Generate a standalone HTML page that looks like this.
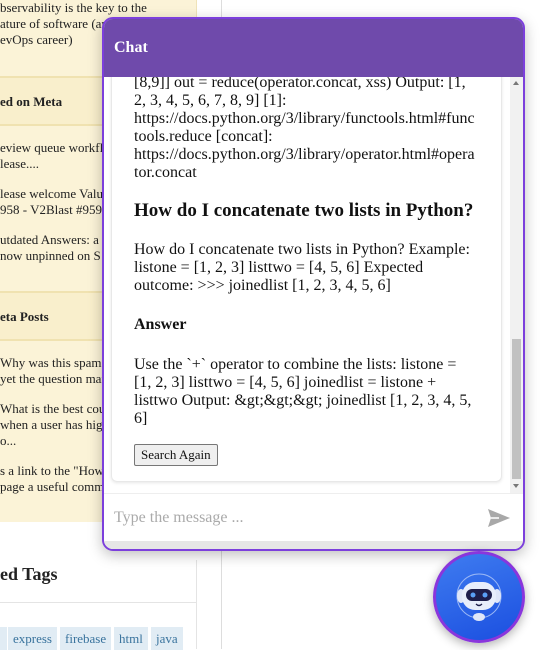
<!DOCTYPE html>
<html><head><style>
*{box-sizing:border-box;margin:0;padding:0}
body{width:545px;height:649px;overflow:hidden;background:#fff;font-family:"Liberation Serif",serif;position:relative;color:#222}
.side{position:absolute;left:0;top:0;width:197px;height:522px;background:#fbf3d7;border-right:1px solid #efe3b8;font-size:13px;line-height:16px}
.side .hd{position:absolute;left:0;width:197px;background:#f9efcc;border-top:2px solid #f0e2b0;border-bottom:2px solid #f0e2b0;font-weight:bold;padding-left:0}
.side p{position:absolute;left:0;white-space:nowrap}
.vline{position:absolute;left:221px;top:0;width:1px;height:649px;background:#ddd}
.tags{position:absolute;left:0;top:560px;width:197px;height:89px;background:#fff;border-right:1px solid #e4e4e4}
.tag{position:absolute;top:627px;height:23px;background:#e1ecf4;color:#39739d;font-size:13px;line-height:23px;padding:0 5px}
.chat{position:absolute;left:102px;top:17px;width:423px;height:534px;border:2px solid #7c3fdc;border-radius:11px;background:#fff;overflow:hidden;box-shadow:0 4px 14px rgba(0,0,0,.25)}
.hdr{height:58px;background:#6f4aab;color:#fff;font-weight:bold;font-size:16px;padding:20px 0 0 10px}
.body{position:absolute;left:0;top:58px;width:419px;height:416px;overflow:hidden}
.card{position:absolute;left:7px;top:-10px;width:391px;height:415px;border:1px solid #e8e8e8;border-radius:6px;box-shadow:0 1px 3px rgba(0,0,0,.1);padding:0 26px 0 22px;font-size:16px;line-height:18px;color:#111;overflow-wrap:anywhere}
.sb{position:absolute;left:406px;top:0;width:13px;height:416px;background:#f1f1f1}
.thumb{position:absolute;left:408px;top:262px;width:9px;height:140px;background:#c1c1c1}
.inp{position:absolute;left:0;top:474px;width:419px;height:48px;border-top:1px solid #eee;color:#aaa;font-size:16px;padding:15px 0 0 10px}
.strip{position:absolute;left:0;top:522px;width:419px;height:10px;background:#e6e6e6}
button{font-family:"Liberation Serif",serif;font-size:13px;padding:2px 6px;border:1px solid #777;border-radius:2px;background:#efefef;color:#111;line-height:16px}
</style></head><body>
<div class="side">
<p style="top:0">bservability is the key to the</p>
<p style="top:16px">ature of software (an</p>
<p style="top:32px">evOps career)</p>
<div class="hd" style="top:76px;height:50px;padding-top:16px">ed on Meta</div>
<p style="top:140px">eview queue workfl</p>
<p style="top:156px">lease....</p>
<p style="top:186px">lease welcome Valu</p>
<p style="top:202px">958 - V2Blast #959</p>
<p style="top:232px">utdated Answers: a</p>
<p style="top:248px">now unpinned on S</p>
<div class="hd" style="top:291px;height:50px;padding-top:16px">eta Posts</div>
<p style="top:355px">Why was this spam</p>
<p style="top:371px">yet the question mar</p>
<p style="top:401px">What is the best cou</p>
<p style="top:417px">when a user has hig</p>
<p style="top:433px">o...</p>
<p style="top:463px">s a link to the "How</p>
<p style="top:479px">page a useful comme</p>
</div>
<div class="vline"></div>
<div class="tags"><div style="position:absolute;top:4px;left:0;font-weight:bold;font-size:18px">ed Tags</div><div style="position:absolute;top:42px;left:0;width:197px;height:1px;background:#e4e4e4"></div></div>
<div class="tag" style="left:0;padding:0 2px">&nbsp;</div>
<div class="tag" style="left:8px">express</div>
<div class="tag" style="left:60px">firebase</div>
<div class="tag" style="left:114px">html</div>
<div class="tag" style="left:151px">java</div>
<div class="chat">
<div class="hdr">Chat</div>
<div class="body">
<div class="card">
<div style="padding-top:6px">[8,9]] out = reduce(operator.concat, xss) Output: [1, 2, 3, 4, 5, 6, 7, 8, 9] [1]: https://docs.python.org/3/library/functools.html#functools.reduce [concat]: https://docs.python.org/3/library/operator.html#operator.concat</div>
<div style="font-weight:bold;font-size:19px;line-height:22px;margin-top:18px">How do I concatenate two lists in Python?</div>
<div style="margin-top:19px">How do I concatenate two lists in Python? Example: listone = [1, 2, 3] listtwo = [4, 5, 6] Expected outcome: &gt;&gt;&gt; joinedlist [1, 2, 3, 4, 5, 6]</div>
<div style="font-weight:bold;margin-top:21px">Answer</div>
<div style="margin-top:22px">Use the `+` operator to combine the lists: listone = [1, 2, 3] listtwo = [4, 5, 6] joinedlist = listone + listtwo Output: &amp;gt;&amp;gt;&amp;gt; joinedlist [1, 2, 3, 4, 5, 6]</div>
<div style="margin-top:16px"><button>Search Again</button></div>
</div>
<div class="sb"></div><div class="thumb"></div>
<div style="position:absolute;left:409px;top:4px;width:0;height:0;border-left:3.5px solid transparent;border-right:3.5px solid transparent;border-bottom:4px solid #777"></div>
<div style="position:absolute;left:409px;top:407px;width:0;height:0;border-left:3.5px solid transparent;border-right:3.5px solid transparent;border-top:4px solid #777"></div>
</div>
<div class="inp">Type the message ...
<svg style="position:absolute;left:383px;top:14px" width="24" height="20" viewBox="0 0 24 20"><path d="M1 1 L23 10 L1 19 L4 10 Z" fill="#a8a8a8"/><path d="M4 10 L12 10" stroke="#fff" stroke-width="1.5"/></svg>
</div>
<div class="strip"></div>
</div>
<div style="position:absolute;left:433px;top:551px;width:92px;height:92px;border-radius:50%;border:3px solid #8a36dc;background:linear-gradient(160deg,#3f7cf0,#1b4fe0);box-shadow:0 3px 10px rgba(0,0,0,.3)">
<svg width="86" height="86" viewBox="0 0 86 86">
<circle cx="43" cy="42" r="22" fill="none" stroke="#9bb8f5" stroke-width="1"/>
<ellipse cx="25" cy="42" rx="4" ry="7" fill="#dfe6f8"/><ellipse cx="61" cy="42" rx="4" ry="7" fill="#dfe6f8"/>
<rect x="26" y="28" width="34" height="28" rx="13" fill="#e8eefb"/>
<rect x="30" y="35" width="26" height="12" rx="6" fill="#1e1e4a"/>
<circle cx="37" cy="41" r="2.5" fill="#5aa0f5"/><circle cx="49" cy="41" r="2.5" fill="#5aa0f5"/>
<path d="M40 50 Q43 53 46 50" stroke="#1e1e4a" stroke-width="1.3" fill="none"/>
<ellipse cx="43" cy="63" rx="6" ry="4" fill="#dfe6f8"/>
</svg></div>
</body></html>
